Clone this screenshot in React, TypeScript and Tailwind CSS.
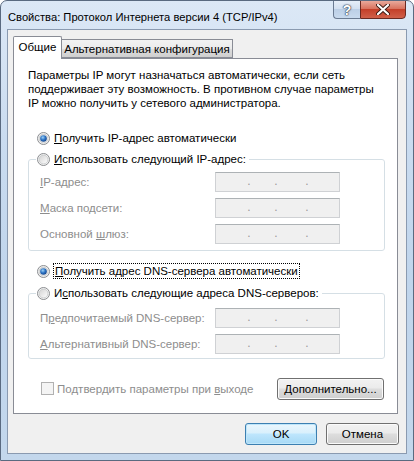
import React from "react";

const font = { fontFamily: '"Liberation Sans", Arial, sans-serif' };

function Radio({ checked }: { checked?: boolean }) {
  return (
    <svg width="13" height="13" viewBox="0 0 13 13" className="shrink-0">
      <defs>
        <linearGradient id="rg" x1="0" y1="0" x2="1" y2="1">
          <stop offset="0" stopColor="#d2d2d2" />
          <stop offset="1" stopColor="#ffffff" />
        </linearGradient>
        <radialGradient id="dot" cx="0.4" cy="0.35" r="0.7">
          <stop offset="0" stopColor="#9fd3f7" />
          <stop offset="0.5" stopColor="#2f76c6" />
          <stop offset="1" stopColor="#123f85" />
        </radialGradient>
      </defs>
      <circle cx="6.5" cy="6.5" r="6" fill="#f4f4f4" stroke="#8b8d90" strokeWidth="1" />
      <circle cx="6.5" cy="6.5" r="4.4" fill="url(#rg)" stroke="#c4c6c8" strokeWidth="0.8" />
      {checked && <circle cx="6.5" cy="6.5" r="3.3" fill="url(#dot)" />}
    </svg>
  );
}

function IpField() {
  return (
    <div className="w-[125px] h-[20px] border border-[#cfd1d4] border-t-[#adb2b5] bg-[#f0f0f0] flex items-end pb-[4px] text-[#9a9a9a] text-[12px] leading-[12px]">
      <span className="w-[19px]" />
      <span className="w-[28px] text-center">.</span>
      <span className="w-[26px] text-center">.</span>
      <span className="w-[36px] text-center">.</span>
    </div>
  );
}

function FieldRow({ label }: { label: React.ReactNode }) {
  return (
    <div className="flex items-center h-[20px]">
      <span className="w-[175px] text-[#8d8d8d] whitespace-nowrap">{label}</span>
      <IpField />
    </div>
  );
}

function Btn({ children, def, className = "" }: { children: React.ReactNode; def?: boolean; className?: string }) {
  return (
    <div
      className={
        "h-[22px] rounded-[3px] border flex items-center justify-center text-black whitespace-nowrap " +
        (def
          ? "border-[#3c7fb1] bg-[linear-gradient(180deg,#eaf6fd_0%,#d9f0fc_45%,#bee6fd_50%,#a7d9f5_100%)] shadow-[inset_0_0_0_1px_#bfe6fa] "
          : "border-[#707070] bg-[linear-gradient(180deg,#f2f2f2_0%,#ebebeb_45%,#dddddd_50%,#cfcfcf_100%)] shadow-[inset_0_0_0_1px_#fbfbfb] ") +
        className
      }
    >
      {children}
    </div>
  );
}

export default function App() {
  return (
    <div
      className="w-[414px] h-[461px] rounded-t-[7px] border border-[#5a6a80] bg-[linear-gradient(180deg,#dce8f6_0%,#cadcf0_30%,#c0d5ec_60%,#c3d7ec_100%)] flex flex-col text-[11.5px] leading-[14px] text-black overflow-hidden"
      style={font}
    >
      {/* Title bar */}
      <div className="h-[28px] flex items-start shrink-0">
        <div className="pl-[7px] pt-[9px] text-[11.2px] leading-[14px] text-black flex-1 whitespace-nowrap">
          Свойства: Протокол Интернета версии 4 (TCP/IPv4)
        </div>
        <div className="flex mr-[7px] -mt-[1px]">
          <div className="w-[27px] h-[19px] border border-[#6b7b92] border-r-0 rounded-bl-[4px] bg-[linear-gradient(180deg,#e6eef8_0%,#d3e0f0_45%,#bccfe6_50%,#c9daee_100%)] flex items-center justify-center">
            <span className="text-[14px] leading-[14px] font-bold text-white [text-shadow:0_0_1px_#2d3b50,0_0_1px_#2d3b50,0_0_2px_#2d3b50]">?</span>
          </div>
          <div className="w-[46px] h-[19px] border border-[#6a2a22] rounded-br-[4px] bg-[linear-gradient(180deg,#e9a99b_0%,#d9735f_45%,#c4402a_50%,#d0604a_100%)] flex items-center justify-center">
            <svg width="14" height="11" viewBox="0 0 14 11">
              <path d="M2 1 L12 10 M12 1 L2 10" stroke="#3a1a14" strokeWidth="4" strokeLinecap="round" />
              <path d="M2 1 L12 10 M12 1 L2 10" stroke="#ffffff" strokeWidth="2.2" strokeLinecap="round" />
            </svg>
          </div>
        </div>
      </div>

      {/* Client area */}
      <div className="ml-[6px] w-[400px] h-[425px] border border-[#8a9ab0] bg-[#f0f0f0] flex flex-col shrink-0">
        {/* Tabs */}
        <div className="pt-[6px] pl-[5px] flex items-end h-[28px]">
          <div className="relative z-10 w-[49px] h-[23px] -mb-[1px] border border-b-0 border-[#898c95] bg-white rounded-t-[2px] flex items-center justify-center pb-[2px] whitespace-nowrap">
            Общие
          </div>
          <div className="w-[171px] h-[19px] border border-l-0 border-[#898c95] bg-[linear-gradient(180deg,#f2f2f2_0%,#ebebeb_50%,#dddddd_51%,#cfcfcf_100%)] flex items-center justify-center whitespace-nowrap">
            Альтернативная конфигурация
          </div>
        </div>

        {/* Panel */}
        <div className="ml-[5px] w-[385px] h-[356px] border border-[#898c95] bg-white flex flex-col">
          <p className="mt-[9px] ml-[14px] leading-[14px] whitespace-nowrap">
            Параметры IP могут назначаться автоматически, если сеть
            <br />
            поддерживает эту возможность. В противном случае параметры
            <br />
            IP можно получить у сетевого администратора.
          </p>

          <div className="mt-[20px] ml-[23px] h-[16px] flex items-center gap-[4px]">
            <Radio checked />
            <span>
              <u>П</u>олучить IP-адрес автоматически
            </span>
          </div>

          <fieldset className="mt-[5px] ml-[14px] w-[357px] border border-[#d5dfe5] rounded-[3px] pl-[11px] pt-[5px] pb-[6px]">
            <legend className="-ml-[4px] px-[1px] h-[16px] flex items-center gap-[4px]">
              <Radio />
              <span className="pr-[2px] whitespace-nowrap">
                <u>И</u>спользовать следующий IP-адрес:
              </span>
            </legend>
            <div className="flex flex-col gap-[6px]">
              <FieldRow label={<><u>I</u>P-адрес:</>} />
              <FieldRow label={<><u>М</u>аска подсети:</>} />
              <FieldRow label={<>Основной <u>ш</u>люз:</>} />
            </div>
          </fieldset>

          <div className="mt-[12px] ml-[23px] h-[16px] flex items-center gap-[3px]">
            <Radio checked />
            <span className="border border-dotted border-black h-[16px] flex items-center px-[1px] whitespace-nowrap">
              <u>П</u>олучить адрес DNS-сервера автоматически
            </span>
          </div>

          <fieldset className="mt-[6px] ml-[14px] w-[357px] border border-[#d5dfe5] rounded-[3px] pl-[11px] pt-[7px] pb-[4px]">
            <legend className="-ml-[4px] px-[1px] h-[16px] flex items-center gap-[4px]">
              <Radio />
              <span className="pr-[2px] whitespace-nowrap">
                И<u>с</u>пользовать следующие адреса DNS-серверов:
              </span>
            </legend>
            <div className="flex flex-col gap-[6px]">
              <FieldRow label={<>П<u>р</u>едпочитаемый DNS-сервер:</>} />
              <FieldRow label={<><u>А</u>льтернативный DNS-сервер:</>} />
            </div>
          </fieldset>

          <div className="mt-[19px] ml-[27px] mr-[13px] h-[21px] flex items-center">
            <div className="w-[13px] h-[13px] border border-[#b1b1b1] bg-[#f4f4f4] shrink-0" />
            <span className="ml-[3px] text-[#8d8d8d] flex-1 whitespace-nowrap">
              Подтвердить параметры при <u>в</u>ыходе
            </span>
            <Btn className="w-[107px] h-[21px]">
              <span>
                <u>Д</u>ополнительно...
              </span>
            </Btn>
          </div>
        </div>

        {/* Bottom buttons */}
        <div className="mt-[9px] mr-[7px] flex justify-end gap-[9px]">
          <Btn def className="w-[72px]">OK</Btn>
          <Btn className="w-[73px]">Отмена</Btn>
        </div>
      </div>
    </div>
  );
}
